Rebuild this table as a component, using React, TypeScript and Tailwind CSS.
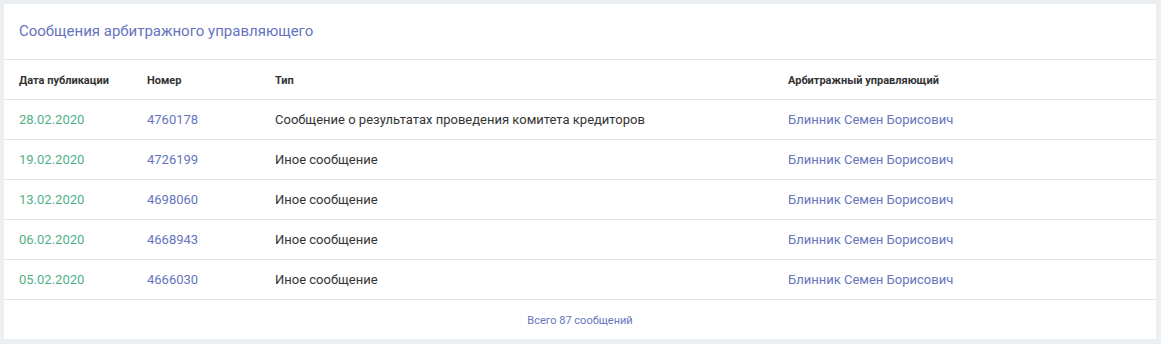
export default function App() {
  const rows = [
    ["28.02.2020", "4760178", "Сообщение о результатах проведения комитета кредиторов"],
    ["19.02.2020", "4726199", "Иное сообщение"],
    ["13.02.2020", "4698060", "Иное сообщение"],
    ["06.02.2020", "4668943", "Иное сообщение"],
    ["05.02.2020", "4666030", "Иное сообщение"],
  ];
  return (
    <div className="w-[1161px] h-[344px] bg-[#eceff1] pt-[4px] pl-[4px] pr-[5px] pb-[5px] font-['Roboto',sans-serif]">
      <div className="bg-white h-full flex flex-col">
        <div className="h-[56px] border-b border-[#e2e4e6] flex items-center px-[15px] pb-[1px]">
          <span className="text-[15px] text-[#6674c0]">Сообщения арбитражного управляющего</span>
        </div>
        <div className="h-[40px] border-b border-[#e2e4e6] grid grid-cols-[128px_128px_513px_1fr] items-center px-[15px] pt-[3px] text-[11px] font-bold text-[#333]">
          <span>Дата публикации</span>
          <span>Номер</span>
          <span>Тип</span>
          <span>Арбитражный управляющий</span>
        </div>
        {rows.map((r) => (
          <div key={r[1]} className="h-[40px] border-b border-[#e2e4e6] grid grid-cols-[128px_128px_513px_1fr] items-center px-[15px] text-[13px]">
            <span className="text-[#52b08a]">{r[0]}</span>
            <span className="text-[#6674c0]">{r[1]}</span>
            <span className="text-[#333]">{r[2]}</span>
            <span className="text-[#6674c0]">Блинник Семен Борисович</span>
          </div>
        ))}
        <div className="flex-1 flex items-center justify-center pt-[3px]">
          <span className="text-[11px] text-[#6674c0]">Всего 87 сообщений</span>
        </div>
      </div>
    </div>
  );
}
